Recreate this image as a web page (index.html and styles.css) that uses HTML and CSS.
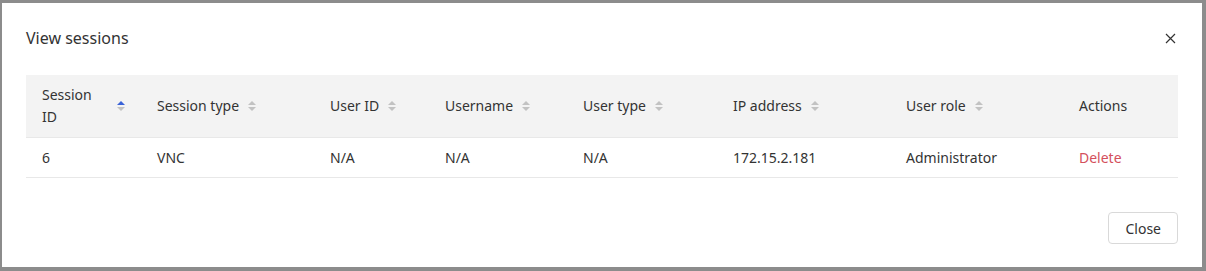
FILE: index.html
```html
<!DOCTYPE html>
<html lang="en">
<head>
  <meta charset="UTF-8">
  <title>View sessions</title>
  <link rel="stylesheet" href="styles.css">
</head>
<body>
  <!-- ======= Sessions modal ======= -->
  <div class="modal">
    <div class="modal-header">
      <h2 class="modal-title">View sessions</h2>
      <button class="modal-close" aria-label="Close">
        <svg width="11" height="11" viewBox="0 0 11 11"><path d="M1 1L10 10M10 1L1 10" stroke="#333" stroke-width="1.2" fill="none"/></svg>
      </button>
    </div>

    <div class="modal-body">
      <table class="sessions">
        <colgroup>
          <col style="width:115px"><col style="width:173px"><col style="width:115px"><col style="width:138px">
          <col style="width:150px"><col style="width:173px"><col style="width:173px"><col style="width:115px">
        </colgroup>
        <thead>
          <tr>
            <th><div class="th-inner"><span>Session ID</span><i class="sorter asc"></i></div></th>
            <th><div class="th-inner"><span>Session type</span><i class="sorter"></i></div></th>
            <th><div class="th-inner"><span>User ID</span><i class="sorter"></i></div></th>
            <th><div class="th-inner"><span>Username</span><i class="sorter"></i></div></th>
            <th><div class="th-inner"><span>User type</span><i class="sorter"></i></div></th>
            <th><div class="th-inner"><span>IP address</span><i class="sorter"></i></div></th>
            <th><div class="th-inner"><span>User role</span><i class="sorter"></i></div></th>
            <th>Actions</th>
          </tr>
        </thead>
        <tbody>
          <tr>
            <td>6</td>
            <td>VNC</td>
            <td>N/A</td>
            <td>N/A</td>
            <td>N/A</td>
            <td>172.15.2.181</td>
            <td>Administrator</td>
            <td><a class="link-danger" href="#">Delete</a></td>
          </tr>
        </tbody>
      </table>
    </div>

    <div class="modal-footer">
      <button class="btn">Close</button>
    </div>
  </div>
</body>
</html>
```

FILE: styles.css
```css
/* ======= Reset ======= */
* {
  box-sizing: border-box;
  margin: 0;
  padding: 0;
}

html, body {
  width: 100%;
  height: 100%;
}

body {
  background: #8c8c8c;
  font-family: "Noto Sans", "Noto Sans CJK SC", sans-serif;
  font-size: 14px;
  color: #333;
  padding: 3px 4px 0 2px;
}

/* ======= Modal ======= */
.modal {
  width: 1200px;
  height: 264px;
  background: #fff;
  display: flex;
  flex-direction: column;
}

.modal-header {
  display: flex;
  align-items: center;
  justify-content: space-between;
  padding: 23px 24px 25px 24px;
}
.modal-title {
  font-size: 16px;
  font-weight: 400;
  line-height: 24px;
  color: #333;
}
.modal-close {
  border: none;
  background: none;
  width: 11px;
  height: 11px;
  margin-right: 2px;
  display: flex;
  cursor: pointer;
}

.modal-body {
  padding: 0 24px;
}

/* ======= Table ======= */
.sessions {
  width: 1152px;
  table-layout: fixed;
  border-collapse: collapse;
}
.sessions th,
.sessions td {
  padding: 9px 16px;
  line-height: 22px;
  text-align: left;
  vertical-align: middle;
  border-bottom: 1px solid #e8e8e8;
}
.sessions td {
  padding-bottom: 8px;
}
.sessions th {
  background: #f3f3f3;
  font-weight: 400;
  color: #333;
}
.th-inner {
  display: flex;
  align-items: center;
  gap: 9px;
}
.th-inner span {
  flex: 0 1 auto;
}

/* 並び替えアイコン */
.sorter {
  flex: none;
  display: flex;
  flex-direction: column;
  gap: 2px;
  width: 8px;
}
.sorter::before,
.sorter::after {
  content: "";
  width: 0;
  height: 0;
  border-left: 4px solid transparent;
  border-right: 4px solid transparent;
}
.sorter::before {
  border-bottom: 4px solid #c2c2c2;
}
.sorter::after {
  border-top: 4px solid #c2c2c2;
}
.sorter.asc::before {
  border-bottom-color: #3a63d8;
}

.link-danger {
  color: #d4505c;
  text-decoration: none;
}

/* ======= Footer ======= */
.modal-footer {
  margin-top: auto;
  display: flex;
  justify-content: flex-end;
  padding: 0 24px 23px;
}
.btn {
  height: 32px;
  padding: 0 16px;
  border: 1px solid #d9d9d9;
  border-radius: 4px;
  background: #fff;
  font-family: inherit;
  font-size: 14px;
  color: #333;
  cursor: pointer;
}
```
